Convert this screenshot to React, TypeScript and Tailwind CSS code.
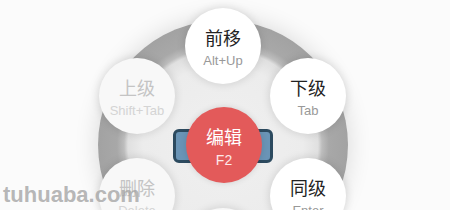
import React from "react";

type Item = { cx: number; cy: number; title: string; sub: string; disabled?: boolean };

const items: Item[] = [
  { cx: 223, cy: 46, title: "前移", sub: "Alt+Up" },
  { cx: 308, cy: 96, title: "下级", sub: "Tab" },
  { cx: 308, cy: 196, title: "同级", sub: "Enter" },
  { cx: 223, cy: 246, title: "删除", sub: "Delete", disabled: true },
  { cx: 137, cy: 196, title: "删除", sub: "Delete", disabled: true },
  { cx: 137, cy: 96, title: "上级", sub: "Shift+Tab", disabled: true },
];

const D = 76;

export default function App() {
  return (
    <div
      className="relative w-[450px] h-[210px] overflow-hidden bg-[#fbfbfb]"
      style={{ fontFamily: '"Liberation Sans", "Noto Sans CJK SC", sans-serif' }}
    >
      {/* ring */}
      <div
        className="absolute left-[98px] top-[20px] w-[250px] h-[250px] rounded-full shadow-[0_0_24px_rgba(0,0,0,0.14)]"
        style={{
          background:
            "radial-gradient(circle, #f0f0f0 0px, #ececec 80px, #e0e0e0 95px, #bdbdbd 99px, #a8a8a8 106px, #a2a2a2 125px)",
        }}
      />
      {items.map((it, i) => (
        <div
          key={i}
          className={
            "absolute w-[76px] h-[76px] rounded-full flex flex-col items-center justify-center shadow-[0_0_10px_rgba(0,0,0,0.14)] " +
            (it.disabled ? "bg-[#f8f8f8]" : "bg-white")
          }
          style={{ left: it.cx - D / 2, top: it.cy - D / 2 }}
        >
          <div
            className={
              "text-[18px] leading-[22px] mt-[4px] " + (it.disabled ? "text-[#c4c4c4]" : "text-[#222]")
            }
          >
            {it.title}
          </div>
          <div
            className={
              "text-[13px] leading-[16px] mt-[3px] " + (it.disabled ? "text-[#d4d4d4]" : "text-[#999]")
            }
          >
            {it.sub}
          </div>
        </div>
      ))}
      {/* blue bar */}
      <div className="absolute left-[173px] top-[129px] w-[100px] h-[34px] rounded-[6px] bg-[#6a94b6] border-[3px] border-[#2c4a5f]" />
      {/* red center */}
      <div className="absolute left-[186px] top-[107px] w-[76px] h-[76px] rounded-full bg-[#e35a5a] flex flex-col items-center justify-center shadow-[0_0_6px_rgba(0,0,0,0.12)]">
        <div className="text-[18px] leading-[22px] text-white mt-[4px]">编辑</div>
        <div className="text-[14px] leading-[16px] text-[#fde8e8] mt-[3px]">F2</div>
      </div>
      {/* watermark */}
      <div className="absolute left-[3px] top-[181px] text-[22px] font-bold leading-[28px] text-[rgba(165,165,165,0.8)]">
        tuhuaba.com
      </div>
    </div>
  );
}
